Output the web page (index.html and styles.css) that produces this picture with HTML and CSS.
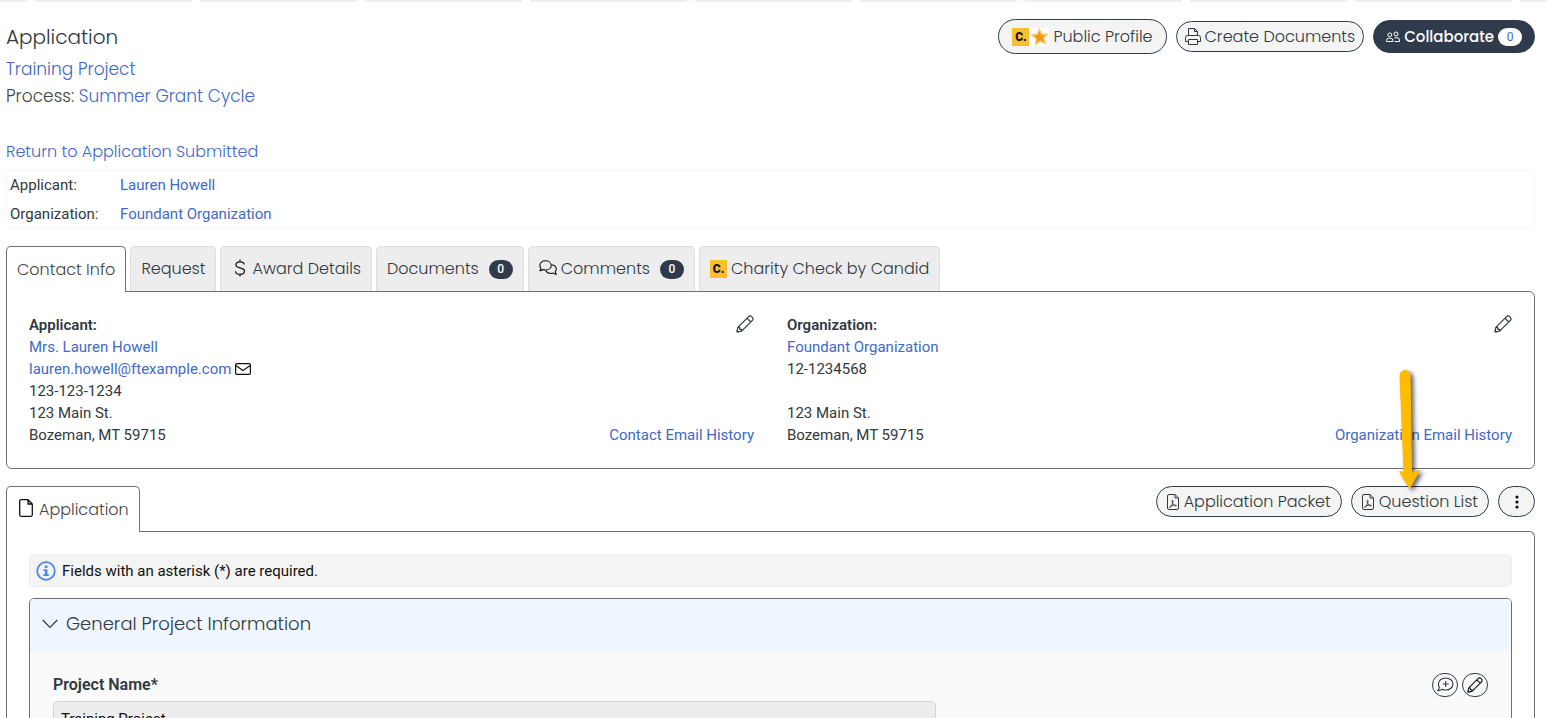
FILE: index.html
```html
<!DOCTYPE html>
<html lang="en">
<head>
<meta charset="utf-8">
<title>Application</title>
<link rel="stylesheet" href="styles.css">
</head>
<body>
<svg class="sprite" aria-hidden="true">
  <symbol id="pen" viewBox="0 0 18 18"><g fill="none" stroke="currentColor" stroke-width="1.2" stroke-linejoin="round"><path d="M1 17l.8-4.6L12.6 1.600a2.100 2.100 0 0 1 3 0l.8.8a2.100 2.100 0 0 1 0 3L5.600 16.200zM11 3.200l3.800 3.800M1.800 12.400h1.900v1.900h1.900v1.900M1 17v-1.600l1.600 1.600z"/></g></symbol>
  <symbol id="pdf" viewBox="0 0 12 16"><g fill="none" stroke="currentColor"><path d="M2 .5h6L11.500 4v10a1.500 1.500 0 0 1-1.500 1.500H2A1.500 1.500 0 0 1 .5 14V2A1.500 1.500 0 0 1 2 .5zM8 .5V4h3.500"/><path d="M5.600 6.200c-1 0-.5 2 .2 3.200 1 1.900 2.200 2.700 3.100 2.700.8 0 .7-1-.9-1.100-2 0-4.500.9-5.200 1.700-.8 1 .4 1.200 1.100 0 .9-1.500 1.900-3.700 2.100-5 .1-.9 0-1.500-.4-1.500z" stroke-width=".9"/></g></symbol>
  <symbol id="mail" viewBox="0 0 16 12"><g fill="none" stroke="currentColor" stroke-width="1.200"><rect x=".6" y=".6" width="14.800" height="10.800" rx="1.400"/><path d="M.8 2.500L8 7.400l7.200-4.900"/></g></symbol>
</svg>

<div class="steps" aria-hidden="true"><i></i><i></i><i></i><i></i><i></i><i></i><i></i><i></i><i></i><i></i><i></i></div>

<main class="page">
  <header class="head">
    <div class="titles">
      <h1>Application</h1>
      <p><a href="#">Training Project</a></p>
      <p>Process: <a href="#">Summer Grant Cycle</a></p>
      <p class="back"><a href="#">Return to Application Submitted</a></p>
    </div>
    <div class="actions">
      <button class="pill pill-tall"><span class="brand"><span class="candid">C.</span><svg class="star" viewBox="0 0 20 18"><rect width="20" height="18" fill="#fff"/><path d="M10.500 1.500l2.200 5 5.600-.3-3.800 4 2 5.500-5.200-2.600-4.700 3.200.7-5.700L2.900 7l5.400-.7z" fill="#f0961e" stroke="#fbc95e" stroke-width="1.400"/></svg></span><span>Public Profile</span></button>
      <button class="pill"><svg class="printer" viewBox="0 0 16 17"><g fill="none" stroke="currentColor" stroke-linejoin="round"><path d="M3.500 7.500v-7h6l3 3v4M9.500.5v3h3M3.500 13.500h-3v-4a2 2 0 0 1 2-2h11a2 2 0 0 1 2 2v4h-3M3.500 11.500h9v5h-9z"/></g></svg><span>Create Documents</span></button>
      <button class="pill pill-dark"><svg class="people" viewBox="0 0 14 12"><g fill="none" stroke="currentColor"><circle cx="3.800" cy="3.800" r="1.900"/><circle cx="10" cy="3" r="2"/><path d="M.5 10.500v-1a2.200 2.200 0 0 1 2.200-2.200h2a2.200 2.200 0 0 1 2.200 2.200v1zM8.500 10.500h5V9a2.200 2.200 0 0 0-2.200-2.200H8.500"/></g></svg><span>Collaborate</span><span class="count">0</span></button>
    </div>
  </header>

  <dl class="summary">
    <dt>Applicant:</dt><dd><a href="#">Lauren Howell</a></dd>
    <dt>Organization:</dt><dd><a href="#">Foundant Organization</a></dd>
  </dl>

  <nav class="tabs">
    <button class="tab active">Contact Info</button>
    <button class="tab">Request</button>
    <button class="tab"><svg class="dollar" viewBox="0 0 12 18"><path d="M10.200 5.500C10 3.700 8.300 2.800 6 2.800S1.900 3.900 1.900 5.800 3.400 8.300 6 8.900s4.500 1.200 4.500 3.300S8.700 15.300 6 15.300s-4.400-1.200-4.600-3.100M6 .5v2.300M6 15.300v2.200" fill="none" stroke="currentColor" stroke-width="1.200"/></svg>Award Details</button>
    <button class="tab">Documents<span class="badge">0</span></button>
    <button class="tab"><svg class="chat" viewBox="0 0 18 16"><g fill="none" stroke="currentColor" stroke-width="1.100" stroke-linejoin="round"><path d="M6.500.8c3.200 0 5.700 2 5.700 4.600S9.700 10 6.500 10c-.9 0-1.800-.2-2.500-.5-.8.7-2 1.100-3.200 1.100.7-.8 1-1.600 1.200-2.300C1.200 7.500.8 6.500.8 5.400.8 2.800 3.300.8 6.500.8z"/><path d="M12.600 4.700c2.700.3 4.700 2.100 4.700 4.400 0 1-.4 1.900-1.100 2.700.2.800.5 1.600 1.200 2.400-1.200 0-2.300-.4-3.200-1.100-.8.300-1.600.4-2.500.4-2.200 0-4.100-1.200-5-2.900"/></g></svg>Comments<span class="badge">0</span></button>
    <button class="tab"><span class="candid">C.</span>Charity Check by Candid</button>
  </nav>
  <section class="panel contacts">
    <div class="contact">
      <div class="lines"><b>Applicant:</b><a href="#">Mrs. Lauren Howell</a><span><a href="#">lauren.howell@ftexample.com</a> <svg class="mail"><use href="#mail"/></svg></span><span>123-123-1234</span><span>123 Main St.</span><span>Bozeman, MT 59715</span></div>
      <div class="side"><button class="bare" aria-label="Edit applicant"><svg class="pen"><use href="#pen"/></svg></button><a href="#">Contact Email History</a></div>
    </div>
    <div class="contact">
      <div class="lines"><b>Organization:</b><a href="#">Foundant Organization</a><span>12-1234568</span><br><span>123 Main St.</span><span>Bozeman, MT 59715</span></div>
      <div class="side"><button class="bare" aria-label="Edit organization"><svg class="pen"><use href="#pen"/></svg></button><a href="#">Organization Email History</a></div>
    </div>
  </section>

  <div class="row">
    <nav class="tabs tabs-second">
      <button class="tab active"><svg class="file" viewBox="0 0 14 18"><path d="M2 .7h7l4.300 4.300v10.800a1.500 1.500 0 0 1-1.500 1.500H2.200a1.500 1.500 0 0 1-1.500-1.500V2A1.300 1.300 0 0 1 2 .7zM9 .7V5h4.300" fill="none" stroke="currentColor" stroke-width="1.300"/></svg>Application</button>
    </nav>
    <div class="actions tools">
      <button class="pill"><svg class="pdf"><use href="#pdf"/></svg><span>Application Packet</span></button>
      <button class="pill target"><svg class="pdf"><use href="#pdf"/></svg><span>Question List</span>
        <svg class="arrow" viewBox="0 0 40 130" aria-hidden="true"><path d="M10 11.500a5 5 0 0 1 10 0L21.500 108.500 29.500 106.500 19.500 124.500 9.500 107.500 14 108.500z" fill="#fb0" stroke="#fb0" stroke-linejoin="round"/></svg></button>
      <button class="pill more" aria-label="More"><svg class="dots" viewBox="0 0 4 14"><circle cx="2" cy="2" r="1.600"/><circle cx="2" cy="7" r="1.600"/><circle cx="2" cy="12" r="1.600"/></svg></button>
    </div>
  </div>
  <section class="panel form">
    <p class="note"><svg class="info" viewBox="0 0 20 20"><circle cx="10" cy="10" r="8.800" fill="none" stroke="#4a86f7" stroke-width="1.800"/><path d="M8.800 4.500h2.600v2.400H8.800zM7.500 8.300h3.900v5h1.400V15H7.300v-1.700h1.500V10H7.500z" fill="#4a86f7"/></svg>Fields with an asterisk (*) are required.</p>
    <div class="group">
      <h2><svg class="chevron" viewBox="0 0 16 10"><path d="M.7 1L8 8.500 15.300 1" fill="none" stroke="currentColor" stroke-width="1.200"/></svg>General Project Information</h2>
      <div class="fields">
        <div class="field-head"><label for="name">Project Name*</label>
          <div class="round-set">
            <button class="round" aria-label="Add comment"><svg class="bubble" viewBox="0 0 17 16"><g fill="none" stroke="currentColor" stroke-width="1.100" stroke-linejoin="round"><path d="M8.700 1c4.100 0 7.300 2.600 7.300 6s-3.200 6-7.300 6c-1.400 0-2.600-.3-3.700-.8-1 .9-2.600 1.500-4.200 1.500.9-1.100 1.400-2.200 1.600-3.300C1.700 9.400 1.400 8.200 1.400 7c0-3.400 3.200-6 7.300-6zM8.700 4v6M5.700 7h6"/></g></svg></button>
            <button class="round" aria-label="Edit"><svg class="pen-small"><use href="#pen"/></svg></button>
          </div>
        </div>
        <input id="name" type="text" value="Training Project" readonly>
      </div>
    </div>
  </section>
</main>
</body>
</html>
```

FILE: styles.css
```css
* { box-sizing: border-box; }
body {
  margin: 0;
  height: 100vh;
  overflow: hidden;
  background: #fff;
  color: #303840;
  font-family: Roboto, sans-serif;
  font-size: 15px;
  line-height: 22px;
}
button, input { font: inherit; color: inherit; }
button { cursor: pointer; }
a { color: #4169c8; text-decoration: none; }
p, h1, h2, dl, dd { margin: 0; }
svg { flex: none; display: block; }
.sprite { position: absolute; width: 0; height: 0; }

.steps { display: flex; gap: 8px; height: 2px; overflow: hidden; }
.steps i { flex: 0 0 157px; background: #ededf3; }
.steps i:first-child { flex-basis: 27px; }

.page { padding: 17px 12px 0 6px; }
.head { display: flex; justify-content: space-between; align-items: flex-start; }
.titles, .pill, .tab, h2 { font-family: Poppins, Inter, sans-serif; font-weight: 300; }
.titles { font-size: 17px; line-height: 27px; color: #444; }
h1 { font-size: 20px; line-height: 37px; font-weight: 300; color: #303840; }
.back { margin-top: 28px; font-size: 16px; }

.actions { display: flex; align-items: center; gap: 9px; }
.pill {
  display: flex;
  align-items: center;
  gap: 4px;
  height: 31px;
  padding: 0 8px;
  border: 1px solid #2f3a4d;
  border-radius: 18px;
  background: #f4f4f4;
  font-size: 16px;
  line-height: 22px;
  white-space: nowrap;
}
.pill-tall { height: 35px; padding: 0 13px; }
.pill-dark { height: 33px; padding: 0 12px; background: #2f3a4b; color: #fff; font-size: 15px; font-weight: 500; }
.brand { display: flex; }
.candid {
  display: inline-block;
  width: 17px;
  height: 18px;
  background: #fabf2c;
  color: #111;
  font: 900 12px/18px Roboto, sans-serif;
  text-align: center;
}
.star { width: 20px; height: 18px; }
.printer { width: 16px; height: 17px; }
.people { width: 14px; height: 12px; }
.count { width: 24px; height: 18px; border-radius: 9px; background: #fff; color: #4169c8; font: 12px/18px Roboto, sans-serif; text-align: center; }

.summary {
  display: grid;
  grid-template-columns: 110px 1fr;
  row-gap: 7px;
  margin-top: 5px;
  padding: 3px 3px 2px;
  border: 1px solid #f7f7f7;
  border-radius: 4px;
}

.tabs { display: flex; gap: 4px; margin-top: 18px; }
.tab {
  display: flex;
  align-items: center;
  height: 45px;
  padding: 0 10px;
  border: 1px solid #ddd;
  border-bottom: 0;
  border-radius: 5px 5px 0 0;
  background: #ededed;
  font-size: 16px;
  white-space: nowrap;
}
.tab.active { height: 46px; margin-bottom: -1px; border-color: #6f6f6f; background: #fff; color: #444; z-index: 1; }
.dollar { width: 12px; height: 18px; margin: 0 6px 3px 3px; color: #111; }
.chat { width: 18px; height: 16px; margin: 0 4px 3px 0; color: #111; }
.tab .candid { margin-right: 4px; }
.badge { width: 24px; height: 19px; margin-left: 10px; border-radius: 10px; background: #2f3a4b; color: #fff; font: 500 12px/19px Roboto, sans-serif; text-align: center; }

.panel { border: 1px solid #6f6f6f; border-radius: 0 6px 6px 6px; padding: 22px; }
.contacts { display: grid; grid-template-columns: 1fr 1fr; gap: 33px; }
.contact { display: flex; justify-content: space-between; }
.lines { display: flex; flex-direction: column; }
.lines b { font-weight: 600; }
.side { display: flex; flex-direction: column; justify-content: space-between; align-items: flex-end; }
.bare { padding: 1px 0 0; border: 0; background: none; }
.pen { width: 18px; height: 18px; }
.mail { display: inline-block; width: 16px; height: 12px; vertical-align: -1px; color: #111; }

.row { display: flex; justify-content: space-between; align-items: flex-start; }
.tabs-second { margin-top: 17px; }
.tabs-second .tab { padding: 0 10px 0 12px; }
.file { width: 14px; height: 18px; margin: 0 6px 3px 0; color: #111; }
.tools { margin-top: 17px; }
.tools .pill { gap: 5px; padding: 0 10px; }
.tools .pill.more { width: 37px; padding: 0; justify-content: center; }
.pdf { width: 12px; height: 16px; }
.dots { width: 4px; height: 14px; fill: #111; }
.target { position: relative; }
.arrow { position: absolute; right: 58px; bottom: 22px; width: 40px; height: 130px; filter: drop-shadow(3px 2px 2px #0009); pointer-events: none; }

.form { border-bottom: 0; border-radius: 0 6px 0 0; }
.note { display: flex; align-items: center; gap: 6px; height: 33px; padding: 0 6px; border: 1px solid #eee; border-radius: 5px; background: #f4f4f4; color: #111; }
.info { width: 20px; height: 20px; }
.group { margin-top: 11px; border: 1px solid #6f6f6f; border-radius: 5px; background: #fafafa; overflow: hidden; }
h2 { display: flex; align-items: center; gap: 8px; height: 52px; padding: 0 12px 2px; background: #eff6ff; font-size: 18px; font-weight: 300; }
.chevron { width: 16px; height: 10px; }
.fields { padding: 21px 23px 24px; }
.field-head { display: flex; justify-content: space-between; height: 29px; }
.field-head label { font-size: 16px; font-weight: 600; line-height: 26px; }
.round-set { display: flex; gap: 4px; }
.round { display: flex; align-items: center; justify-content: center; width: 26px; height: 24px; margin-top: 1px; padding: 0; border: 1px solid #2f3a4d; border-radius: 12px; background: #fafafa; }
.bubble { width: 17px; height: 16px; }
.pen-small { width: 16px; height: 16px; color: #111; }
input { display: block; width: 61.5%; height: 35px; padding: 0 7px; border: 1px solid #d5d5d5; border-radius: 5px; background: #ededed; color: #111; }
```
